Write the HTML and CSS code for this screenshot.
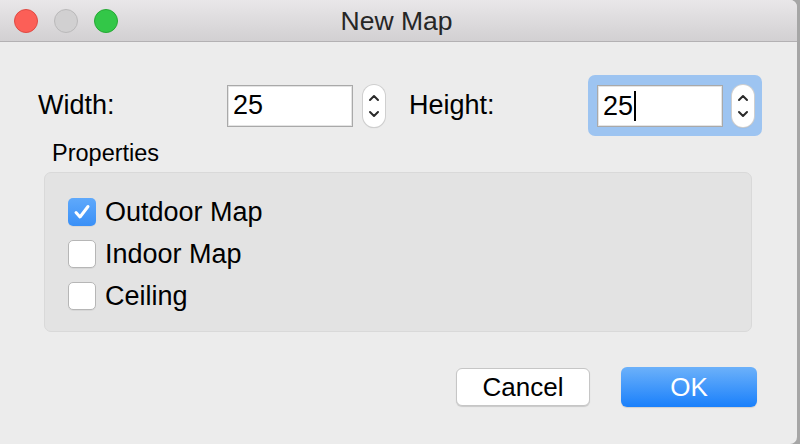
FILE: index.html
```html
<!DOCTYPE html>
<html>
<head>
<meta charset="utf-8">
<link rel="stylesheet" href="styles.css">
</head>
<body>
<div class="window">
  <div class="titlebar">
    <div class="lights">
      <span class="light red"></span>
      <span class="light gray"></span>
      <span class="light green"></span>
    </div>
    <div class="title">New Map</div>
    <div></div>
  </div>
  <div class="content">
    <div class="size-row">
      <label class="field-label width-label">Width:</label>
      <div class="spin">
        <div class="input">25</div>
        <div class="stepper">
          <svg width="22" height="42" viewBox="0 0 22 42"><path d="M7 15 L11 11 L15 15" fill="none" stroke="#2a2a2a" stroke-width="2" stroke-linecap="round" stroke-linejoin="round"/><path d="M7 27 L11 31 L15 27" fill="none" stroke="#2a2a2a" stroke-width="2" stroke-linecap="round" stroke-linejoin="round"/></svg>
        </div>
      </div>
      <label class="field-label height-label">Height:</label>
      <div class="spin focus">
        <div class="input">25<span class="caret"></span></div>
        <div class="stepper">
          <svg width="22" height="42" viewBox="0 0 22 42"><path d="M7 15 L11 11 L15 15" fill="none" stroke="#2a2a2a" stroke-width="2" stroke-linecap="round" stroke-linejoin="round"/><path d="M7 27 L11 31 L15 27" fill="none" stroke="#2a2a2a" stroke-width="2" stroke-linecap="round" stroke-linejoin="round"/></svg>
        </div>
      </div>
    </div>
    <div class="group-title">Properties</div>
    <div class="group">
      <div class="check-row">
        <span class="box checked"><svg width="28" height="28" viewBox="0 0 28 28"><path d="M8 14.5 L12 19 L20 8.5" fill="none" stroke="#fff" stroke-width="3" stroke-linecap="round" stroke-linejoin="round"/></svg></span>
        <span class="check-label">Outdoor Map</span>
      </div>
      <div class="check-row">
        <span class="box"></span>
        <span class="check-label">Indoor Map</span>
      </div>
      <div class="check-row">
        <span class="box"></span>
        <span class="check-label">Ceiling</span>
      </div>
    </div>
    <div class="buttons">
      <button class="btn cancel">Cancel</button>
      <button class="btn ok">OK</button>
    </div>
  </div>
</div>
</body>
</html>
```
FILE: styles.css
```css
*, *::before, *::after {
  box-sizing: border-box;
}

html, body {
  margin: 0;
  padding: 0;
  width: 800px;
  height: 444px;
  overflow: hidden;
  background: #a6a6a6;
  font-family: "Liberation Sans", Arial, sans-serif;
}

.window {
  width: 797px;
  height: 444px;
  background: #ececec;
  border-radius: 0 7px 7px 0;
  overflow: hidden;
  display: flex;
  flex-direction: column;
}

.titlebar {
  height: 42px;
  border-bottom: 1px solid #b3b1b3;
  background: linear-gradient(#e9e7e9, #d2d0d2);
  display: grid;
  grid-template-columns: 1fr auto 1fr;
  align-items: center;
  flex-shrink: 0;
}

.lights {
  display: flex;
  gap: 16px;
  padding-left: 14px;
}

.light {
  width: 24px;
  height: 24px;
  border-radius: 50%;
  border: 1px solid;
}
.red { background: #fc5f57; border-color: #df4a43; }
.gray { background: #d1d0d1; border-color: #bab9ba; }
.green { background: #33c748; border-color: #25a934; }

.title {
  font-size: 26.5px;
  color: #262626;
  padding-top: 1px;
  padding-right: 4px;
}

.content {
  padding: 33px 0 0 38px;
  display: flex;
  flex-direction: column;
}

.size-row {
  display: flex;
  align-items: center;
  height: 61px;
}

.size-row > * { flex-shrink: 0; }

.field-label {
  font-size: 27px;
  color: #000;
}
.width-label { width: 189px; }
.height-label { width: 179px; margin-left: 24px; }

.spin {
  display: flex;
  align-items: center;
  gap: 10px;
}

.spin.focus {
  background: #9dc4f1;
  border-radius: 7px;
  padding: 10px 8px 9px 9px;
  gap: 9px;
}

.input {
  width: 126px;
  height: 42px;
  border: 1px solid #a9a9a9;
  box-shadow: inset 0 0 0 1px #e4e4e4;
  background: #fff;
  font-size: 27px;
  padding-left: 5px;
  color: #000;
  display: flex;
  align-items: center;
}

.caret {
  display: inline-block;
  width: 2px;
  height: 30px;
  background: #000;
  margin-left: 1px;
}

.stepper {
  width: 22px;
  height: 42px;
  background: #fff;
  border-radius: 11px;
  box-shadow: 0 0 0 1px #cfcfcf, 0 1px 1px rgba(0,0,0,0.18);
  display: flex;
}

.group-title {
  font-size: 23.5px;
  line-height: 26px;
  margin: 4px 0 6px 14px;
  color: #000;
}

.group {
  margin-left: 6px;
  width: 708px;
  height: 160px;
  background: #e3e3e3;
  border: 1px solid #d9d9d9;
  border-radius: 7px;
  padding: 18px 0 0 23px;
}

.check-row {
  height: 42px;
  display: flex;
  align-items: center;
  gap: 9px;
}

.box {
  width: 28px;
  height: 28px;
  background: #fff;
  border: 1px solid #b6b6b6;
  border-radius: 5px;
  box-shadow: 0 1px 0 rgba(0,0,0,0.05);
  display: flex;
}

.box.checked {
  border: none;
  background: linear-gradient(#5fa9fb, #3a90f7);
}

.box.checked svg { display: block; }

.check-label {
  font-size: 27px;
  color: #000;
}

.buttons {
  display: flex;
  align-items: center;
  gap: 31px;
  margin-top: 35px;
  padding-left: 418px;
}

.btn {
  font-family: "Liberation Sans", Arial, sans-serif;
  font-size: 26px;
  padding: 0;
  cursor: default;
  flex-shrink: 0;
}

.cancel {
  width: 134px;
  height: 38px;
  background: #fff;
  color: #000;
  border: 1px solid #c6c6c6;
  border-radius: 6px;
  box-shadow: 0 1px 1px rgba(0,0,0,0.15);
}

.ok {
  width: 136px;
  height: 40px;
  color: #fff;
  border: none;
  border-radius: 6px;
  background: linear-gradient(#6cb1fa, #1a80fb);
  box-shadow: 0 1px 1px rgba(0,0,0,0.12);
}
```
